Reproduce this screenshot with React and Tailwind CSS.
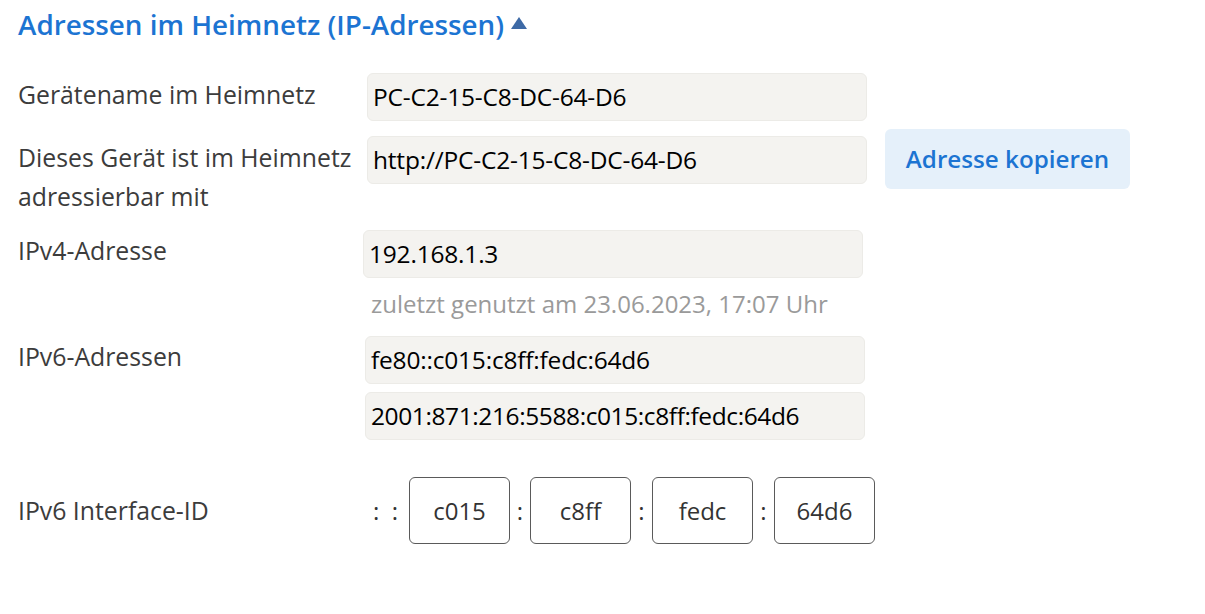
import React from "react";

const F = { fontFamily: "'Open Sans', 'Liberation Sans', sans-serif" };

function Field({ children, className = "" }) {
  return (
    <div
      className={
        "h-[48px] w-[500px] rounded-[6px] bg-[#f4f3f0] border border-[#ecebe7] pl-[5px] flex items-center text-[24.5px] text-black tracking-[-0.2px] " +
        className
      }
    >
      {children}
    </div>
  );
}

function IdBox({ v }) {
  return (
    <div className="w-[101px] h-[67px] rounded-[6px] border border-[#5a5a5a] flex items-center justify-center text-[24px] text-[#333]">
      {v}
    </div>
  );
}

export default function App() {
  return (
    <div className="w-[1205px] h-[614px] bg-white pl-[18px] pt-[5px]" style={F}>
      <div className="flex items-center h-[38px]">
        <h2 className="text-[27.8px] font-semibold text-[#1c74d2] leading-[38px]">
          Adressen im Heimnetz (IP-Adressen)
        </h2>
        <svg width="16" height="12" viewBox="0 0 16 12" className="ml-[7px] mt-[-2px]">
          <polygon points="8,0 16,12 0,12" fill="#3e6aa6" />
        </svg>
      </div>

      <div className="text-[24.8px] text-[#3c3c3c]">
        <div className="flex mt-[30px]">
          <div className="w-[349px] pt-[2px] pb-[2px] leading-[39px]">Gerätename im Heimnetz</div>
          <Field>PC-C2-15-C8-DC-64-D6</Field>
        </div>

        <div className="flex mt-[15px]">
          <div className="w-[349px] pt-[2px] pb-[2px] leading-[39px] whitespace-nowrap">
            Dieses Gerät ist im Heimnetz
            <br />
            adressierbar mit
          </div>
          <div className="flex items-start">
            <Field>http://PC-C2-15-C8-DC-64-D6</Field>
            <button className="ml-[18px] mt-[-7px] w-[245px] h-[60px] rounded-[6px] bg-[#e5f0fa] text-[#1c74d2] text-[24.2px] font-semibold">
              Adresse kopieren
            </button>
          </div>
        </div>

        <div className="flex mt-[12px]">
          <div className="w-[345px] pt-[1px] leading-[39px]">IPv4-Adresse</div>
          <div>
            <Field>192.168.1.3</Field>
            <div className="pl-[8px] mt-[10px] leading-[32px] text-[24px] text-[#9a9a9a]">
              zuletzt genutzt am 23.06.2023, 17:07 Uhr
            </div>
          </div>
        </div>

        <div className="flex mt-[16px]">
          <div className="w-[347px] pt-[1px] leading-[39px]">IPv6-Adressen</div>
          <div className="flex flex-col gap-[8px]">
            <Field>fe80::c015:c8ff:fedc:64d6</Field>
            <Field className="tracking-[-0.4px]">2001:871:216:5588:c015:c8ff:fedc:64d6</Field>
          </div>
        </div>

        <div className="flex items-center mt-[37px]">
          <div className="w-[349px] leading-[39px]">IPv6 Interface-ID</div>
          <div className="flex items-center text-[#333] text-[24px]">
            <span className="ml-[6px] w-[36px]">:&nbsp;&nbsp;:</span>
            <IdBox v="c015" />
            <span className="w-[20px] text-center">:</span>
            <IdBox v="c8ff" />
            <span className="w-[21px] text-center">:</span>
            <IdBox v="fedc" />
            <span className="w-[21px] text-center">:</span>
            <IdBox v="64d6" />
          </div>
        </div>
      </div>
    </div>
  );
}
